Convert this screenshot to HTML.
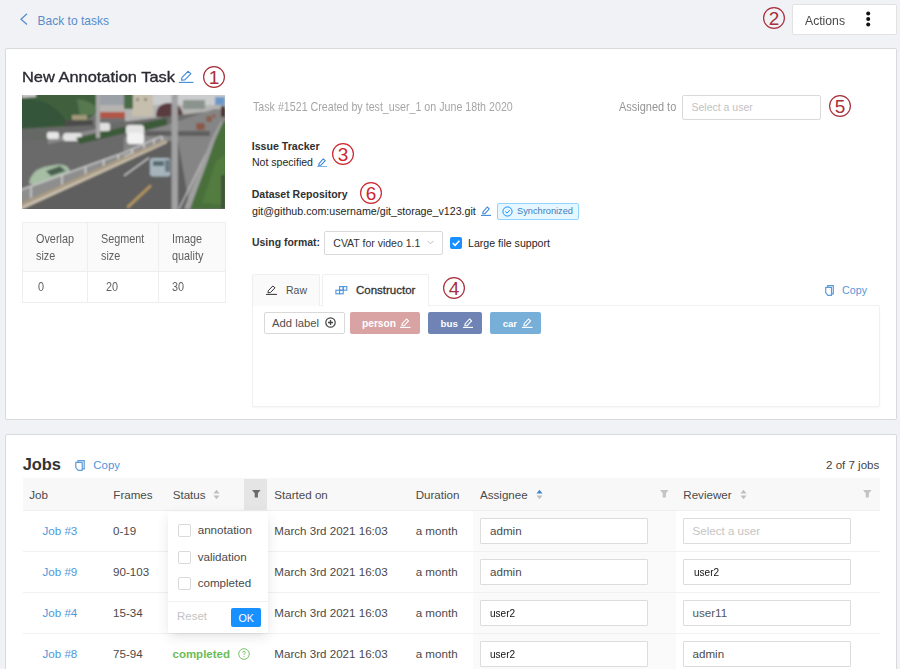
<!DOCTYPE html>
<html><head><meta charset="utf-8"><style>
html,body{margin:0;padding:0;width:900px;height:669px;overflow:hidden;background:#f0f2f5;position:relative;font-family:"Liberation Sans",sans-serif}
.t{position:absolute;white-space:nowrap;line-height:1}
.r{position:absolute;display:block}
</style></head><body>
<svg class="r" style="left:18px;top:12px" width="12" height="14" viewBox="0 0 12 14"><path d="M9 1.8 L3 7.2 L9 12.6" fill="none" stroke="#5a8ccc" stroke-width="1.3"/></svg>
<div class="t" style="left:37.50px;top:15.12px;font-size:12.024px;color:#5a8ccc;font-weight:400;">Back to tasks</div>
<svg class="r" style="left:762px;top:5.800000000000001px" width="24" height="24" viewBox="0 0 24 24"><circle cx="12" cy="12" r="10.4" fill="none" stroke="#a8303c" stroke-width="1.2"/><text x="12" y="18.6" text-anchor="middle" font-family="Liberation Sans" font-size="19" fill="#a8303c">2</text></svg>
<div class="r" style="left:792px;top:4px;width:105px;height:31px;background:#fff;border:1px solid #e2e2e2;border-radius:2px;box-sizing:border-box"></div>
<div class="t" style="left:805.00px;top:13.92px;font-size:13.081px;color:#4a4a4a;font-weight:400;transform:scaleX(0.9325);transform-origin:0 0;">Actions</div>
<svg class="r" style="left:864px;top:9px" width="8" height="20" viewBox="0 0 8 20"><circle cx="4.2" cy="4.6" r="2" fill="#111"/><circle cx="4.2" cy="10" r="2" fill="#111"/><circle cx="4.2" cy="15.4" r="2" fill="#111"/></svg>
<div class="r" style="left:5px;top:48px;width:892px;height:372px;background:#fff;border:1px solid #d8dadc;border-radius:2px;box-sizing:border-box"></div>
<div class="t" style="left:22.30px;top:69.20px;font-size:15.116px;color:#2b2b33;font-weight:400;transform:scaleX(1.0860);transform-origin:0 0;-webkit-text-stroke:0.35px #2b2b33">New Annotation Task</div>
<svg class="r" style="left:179px;top:70px" width="14.5" height="13" viewBox="0 0 14.5 13"><path d="M2.61 10.14 L2.9000000000000004 7.539999999999999 L8.99 1.3 L11.889999999999999 3.6400000000000006 L5.800000000000001 9.88 Z" fill="none" stroke="#3f8ad8" stroke-width="1.1" stroke-linejoin="round"/><line x1="0" y1="12.4" x2="14.5" y2="12.4" stroke="#3f8ad8" stroke-width="1.1"/></svg>
<svg class="r" style="left:202px;top:64.5px" width="24" height="24" viewBox="0 0 24 24"><circle cx="12" cy="12" r="10.4" fill="none" stroke="#a8303c" stroke-width="1.2"/><text x="12" y="18.6" text-anchor="middle" font-family="Liberation Sans" font-size="19" fill="#a8303c">1</text></svg>
<svg class="r" style="left:22px;top:95px" width="203" height="114" viewBox="0 0 203 114"><defs><filter id="bl" filterUnits="userSpaceOnUse" x="-5" y="-5" width="213" height="124"><feGaussianBlur stdDeviation="0.9"/></filter><clipPath id="cp"><rect width="203" height="114"/></clipPath></defs>
<g clip-path="url(#cp)"><g filter="url(#bl)">
<rect x="-5" y="-5" width="213" height="124" fill="#747474"/>
<!-- buildings strip -->
<rect x="74" y="-5" width="134" height="32" fill="#b4b4b2"/>
<rect x="78" y="-5" width="24" height="15" fill="#9aa0a6"/>
<rect x="131" y="-5" width="77" height="15" fill="#cbcccd"/>
<rect x="110" y="-5" width="21" height="26" fill="#c7bfae"/>
<rect x="114" y="3" width="3" height="3" fill="#8a8478"/><rect x="122" y="3" width="3" height="3" fill="#8a8478"/>
<rect x="161" y="5" width="22" height="9" fill="#8a948c"/>
<rect x="193" y="2" width="10" height="8" fill="#6a98c8"/>
<path d="M134 22 Q134 8 147 8 Q160 8 161 22 Z" fill="#5a3a40"/>
<rect x="78" y="10" width="24" height="7" fill="#b6b4b0"/>
<rect x="78" y="17" width="25" height="6" fill="#b25444"/>
<rect x="78" y="23" width="25" height="7" fill="#707070"/>
<!-- trees -->
<path d="M-5 -5 L74 -5 L76 14 L70 22 L60 26 L48 34 L-5 36 Z" fill="#41603e"/>
<path d="M-5 4 Q10 2 25 8 Q40 16 46 30 L-5 34 Z" fill="#36543a"/>
<path d="M55 4 Q68 6 74 12 L72 20 L58 20 Z" fill="#587850"/>
<path d="M0 -5 L14 -5 L14 2 L0 3 Z" fill="#c8cac8"/>
<rect x="102" y="-5" width="9" height="19" fill="#4c6a46"/>
<rect x="50" y="20" width="15" height="5" fill="#a09878"/>
<rect x="43" y="25" width="28" height="9" fill="#4c4c4a"/>
<!-- left upper road, wall, sidewalk -->
<path d="M-5 34 L74 30 L208 14 L208 60 L-5 97 Z" fill="#6a6a6a"/>
<path d="M-5 34 L26 34 L26 45 L-5 46 Z" fill="#666866"/>
<path d="M26 44 L74 34 L74 38 L26 49 Z" fill="#8a8a8a"/>
<rect x="25" y="37" width="12" height="7" rx="2" fill="#e6e6e6"/>
<rect x="41" y="38" width="19" height="8" rx="3" fill="#e2e2e2"/>
<path d="M54 43 L102 32 L145 23 L145 31 L102 38.5 L58 49 Z" fill="#3a5a38"/>
<rect x="74" y="28" width="14" height="8" rx="2" fill="#e0e0e0"/>
<rect x="74" y="-5" width="4" height="48" fill="#a8a8a8"/>
<!-- right road, lighter -->
<path d="M102 42 L145 30 L192 14 L208 14 L208 57 L190 57 L166 114 L100 114 Z" fill="#858585"/>
<rect x="104" y="30" width="18" height="10" rx="3" fill="#e4e4e4"/>
<rect x="105" y="38" width="17" height="11" rx="3" fill="#f2f2f2"/>
<rect x="174" y="28" width="9" height="7" rx="2" fill="#8a5a48"/>
<rect x="184" y="21" width="6" height="6" rx="2" fill="#8a6050"/>
<rect x="190" y="19" width="4" height="4" rx="1" fill="#8a6858"/>
<rect x="199" y="11" width="4" height="11" fill="#4a2a2a"/>
<!-- upper-left wet reflections -->

<!-- green car -->
<path d="M7 88 Q9 76 22 72 L36 69.5 Q46 69 48 76 L46 82 L14 92 Z" fill="#a6bea4"/>
<path d="M24 76 L38 71 L44 76 L29 81 Z" fill="#4a6050"/>
<!-- lower road -->
<path d="M-5 116 L102 66 L145 46 L156 46 L168 114 L-5 120 Z" fill="#5e5e5e"/>
<!-- fence -->
<path d="M-5 95.5 L102 57 L145 38 L145 44 L102 61.5 L-5 110 Z" fill="#8e8e8e"/>
<path d="M-5 95.5 L102 57 L145 38 L145 39.2 L102 58.2 L-5 97 Z" fill="#d0d0d0"/>
<g stroke="#dadada" stroke-width="1.3">
<line x1="9" y1="92" x2="9" y2="103"/><line x1="40" y1="80" x2="40" y2="91"/><line x1="63.5" y1="72" x2="63.5" y2="82"/><line x1="81.6" y1="65" x2="81.6" y2="75"/><line x1="96.4" y1="60" x2="96.4" y2="68"/><line x1="110" y1="54" x2="110" y2="62"/><line x1="122" y1="48.5" x2="122" y2="56"/><line x1="132" y1="44" x2="132" y2="51"/><line x1="140" y1="40.5" x2="140" y2="47"/>
</g>
<!-- curb -->
<path d="M-5 110 L102 61.5 L145 44 L145 48 L102 68 L-5 117 Z" fill="#aa9c84"/>
<path d="M-5 114 L102 65.5 L145 46.5 L145 47.5 L102 67 L-5 116 Z" fill="#d6cfc2"/>
<!-- markings -->
<path d="M102 80.8 L127 62.7" stroke="#d0d0d0" stroke-width="1.4"/>
<path d="M102 61.5 L112 57" stroke="#d0d0d0" stroke-width="1.2"/>
<path d="M105.4 112.5 L129 90.4" stroke="#b89a60" stroke-width="2.6"/>
<path d="M157 114 L185 57" stroke="#c8c8c8" stroke-width="1.2"/>
<!-- van -->
<rect x="128" y="63" width="20.5" height="18.4" rx="3" fill="#a6b4bc"/>
<rect x="131" y="66" width="11" height="5" fill="#5a6a72"/>
<rect x="143" y="65" width="5" height="12" fill="#6a7a82"/>
<!-- curb right & green strip -->
<path d="M162 114 L180 68 L189 45 L199 26 L201 27 L193 45 L185 68 L168 114 Z" fill="#a0a0a0"/>
<path d="M168 114 L185 68 L193 45 L201 27 L208 27 L208 114 Z" fill="#48703a"/>
<path d="M180 108 L194 66 L203 60 L203 110 Z" fill="#5a8244" opacity="0.6"/>
<rect x="199.5" y="80" width="3" height="34" fill="#3a4a34"/>
<!-- pole & bar -->
<rect x="123.5" y="36" width="64.5" height="5" fill="#5e5e5e"/>
<rect x="149.6" y="-5" width="6.2" height="124" fill="#a2a2a2"/>
</g></g>
</svg>
<div class="r" style="left:22px;top:222px;width:204px;height:81px;background:#fff;border:1px solid #eeeeee;box-sizing:border-box"></div>
<div class="r" style="left:23px;top:223px;width:202px;height:48px;background:#fafafa"></div>
<div class="r" style="left:23px;top:271px;width:202px;height:1px;background:#eeeeee"></div>
<div class="r" style="left:87px;top:223px;width:1px;height:79px;background:#eeeeee"></div>
<div class="r" style="left:158px;top:223px;width:1px;height:79px;background:#eeeeee"></div>
<div class="t" style="left:35.80px;top:232.79px;font-size:12.064px;color:#5f5f5f;font-weight:400;transform:scaleX(0.8996);transform-origin:0 0;">Overlap</div>
<div class="t" style="left:35.80px;top:249.79px;font-size:12.064px;color:#5f5f5f;font-weight:400;transform:scaleX(0.8996);transform-origin:0 0;">size</div>
<div class="t" style="left:100.60px;top:232.79px;font-size:12.064px;color:#5f5f5f;font-weight:400;transform:scaleX(0.8996);transform-origin:0 0;">Segment</div>
<div class="t" style="left:100.60px;top:249.79px;font-size:12.064px;color:#5f5f5f;font-weight:400;transform:scaleX(0.8996);transform-origin:0 0;">size</div>
<div class="t" style="left:171.50px;top:232.79px;font-size:12.064px;color:#5f5f5f;font-weight:400;transform:scaleX(0.8996);transform-origin:0 0;">Image</div>
<div class="t" style="left:171.50px;top:249.79px;font-size:12.064px;color:#5f5f5f;font-weight:400;transform:scaleX(0.8996);transform-origin:0 0;">quality</div>
<div class="t" style="left:38.00px;top:280.79px;font-size:12.064px;color:#5f5f5f;font-weight:400;transform:scaleX(0.8996);transform-origin:0 0;">0</div>
<div class="t" style="left:105.50px;top:280.79px;font-size:12.064px;color:#5f5f5f;font-weight:400;transform:scaleX(0.8996);transform-origin:0 0;">20</div>
<div class="t" style="left:171.50px;top:280.79px;font-size:12.064px;color:#5f5f5f;font-weight:400;transform:scaleX(0.8996);transform-origin:0 0;">30</div>
<div class="t" style="left:252.70px;top:101.81px;font-size:11.919px;color:#a6a6a6;font-weight:400;transform:scaleX(0.8959);transform-origin:0 0;">Task #1521 Created by test_user_1 on June 18th 2020</div>
<div class="t" style="left:618.70px;top:101.71px;font-size:11.919px;color:#949494;font-weight:400;transform:scaleX(0.9201);transform-origin:0 0;">Assigned to</div>
<div class="r" style="left:682px;top:95px;width:139px;height:25px;background:#fff;border:1px solid #dadada;border-radius:2px;box-sizing:border-box"></div>
<div class="t" style="left:691.50px;top:102.11px;font-size:10.504px;color:#c2c2c2;font-weight:400;">Select a user</div>
<svg class="r" style="left:828px;top:94px" width="24" height="24" viewBox="0 0 24 24"><circle cx="12" cy="12" r="10.4" fill="none" stroke="#a8303c" stroke-width="1.2"/><text x="12" y="18.6" text-anchor="middle" font-family="Liberation Sans" font-size="19" fill="#a8303c">5</text></svg>
<div class="t" style="left:251.70px;top:140.99px;font-size:10.636px;color:#303030;font-weight:700;">Issue Tracker</div>
<div class="t" style="left:252.00px;top:157.06px;font-size:10.553px;color:#262626;font-weight:400;">Not specified</div>
<svg class="r" style="left:316.5px;top:157.5px" width="10" height="9.5" viewBox="0 0 10 9.5"><path d="M1.7999999999999998 7.41 L2.0 5.51 L6.2 0.9500000000000001 L8.2 2.66 L4.0 7.22 Z" fill="none" stroke="#3f8ad8" stroke-width="1.1" stroke-linejoin="round"/><line x1="0" y1="8.9" x2="10" y2="8.9" stroke="#3f8ad8" stroke-width="1.1"/></svg>
<svg class="r" style="left:331.4px;top:141.5px" width="24" height="24" viewBox="0 0 24 24"><circle cx="12" cy="12" r="10.4" fill="none" stroke="#cc2630" stroke-width="1.2"/><text x="12" y="18.6" text-anchor="middle" font-family="Liberation Sans" font-size="19" fill="#cc2630">3</text></svg>
<div class="t" style="left:251.70px;top:188.68px;font-size:10.534px;color:#303030;font-weight:700;">Dataset Repository</div>
<svg class="r" style="left:359.3px;top:180.6px" width="24" height="24" viewBox="0 0 24 24"><circle cx="12" cy="12" r="10.4" fill="none" stroke="#cc2630" stroke-width="1.2"/><text x="12" y="18.6" text-anchor="middle" font-family="Liberation Sans" font-size="19" fill="#cc2630">6</text></svg>
<div class="t" style="left:252.00px;top:205.96px;font-size:10.682px;color:#1f1f1f;font-weight:400;">git@github.com:username/git_storage_v123.git</div>
<svg class="r" style="left:481px;top:206px" width="10" height="10" viewBox="0 0 10 10"><path d="M1.7999999999999998 7.800000000000001 L2.0 5.8 L6.2 1.0 L8.2 2.8000000000000003 L4.0 7.6 Z" fill="none" stroke="#3f8ad8" stroke-width="1.1" stroke-linejoin="round"/><line x1="0" y1="9.4" x2="10" y2="9.4" stroke="#3f8ad8" stroke-width="1.1"/></svg>
<div class="r" style="left:497px;top:203px;width:82px;height:17px;background:#e6f7ff;border:1px solid #91d5ff;border-radius:2px;box-sizing:border-box"></div>
<svg class="r" style="left:502px;top:206px" width="11" height="11" viewBox="0 0 11 11"><circle cx="5.5" cy="5.5" r="4.6" fill="none" stroke="#1890ff" stroke-width="1"/><path d="M3.4 5.6 L5 7.1 L7.7 4.2" fill="none" stroke="#1890ff" stroke-width="1"/></svg>
<div class="t" style="left:517.00px;top:207.17px;font-size:9.243px;color:#3a7cc0;font-weight:400;">Synchronized</div>
<div class="t" style="left:252.00px;top:238.14px;font-size:10.462px;color:#333;font-weight:700;">Using format:</div>
<div class="r" style="left:324px;top:231px;width:119px;height:24px;background:#fff;border:1px solid #d9d9d9;border-radius:2px;box-sizing:border-box"></div>
<div class="t" style="left:333.30px;top:238.10px;font-size:10.506px;color:#333;font-weight:400;">CVAT for video 1.1</div>
<svg class="r" style="left:427px;top:240px" width="7" height="5" viewBox="0 0 7 5"><path d="M0.5 0.8 L3.5 3.8 L6.5 0.8" fill="none" stroke="#bfbfbf" stroke-width="1"/></svg>
<div class="r" style="left:450px;top:237px;width:12px;height:12px;background:#1890ff;border-radius:2px"></div>
<svg class="r" style="left:450px;top:237px" width="12" height="12" viewBox="0 0 12 12"><path d="M2.8 6.2 L5.1 8.4 L9.4 3.8" fill="none" stroke="#fff" stroke-width="1.6"/></svg>
<div class="t" style="left:468.00px;top:238.01px;font-size:10.613px;color:#262626;font-weight:400;">Large file support</div>
<div class="r" style="left:252px;top:305px;width:628px;height:102px;background:#fff;border:1px solid #f1f1f1;border-radius:2px;box-shadow:0 1px 2px rgba(0,0,0,.04);box-sizing:border-box"></div>
<div class="r" style="left:252px;top:274px;width:68px;height:32px;background:#fafafa;border:1px solid #efefef;border-bottom:none;border-radius:2px 2px 0 0;box-sizing:border-box"></div>
<div class="r" style="left:322px;top:274px;width:107px;height:32px;background:#fff;border:1px solid #efefef;border-bottom:none;border-radius:2px 2px 0 0;box-sizing:border-box"></div>
<svg class="r" style="left:266px;top:285px" width="11" height="10" viewBox="0 0 11 10"><path d="M1.98 7.800000000000001 L2.2 5.8 L6.82 1.0 L9.02 2.8000000000000003 L4.4 7.6 Z" fill="none" stroke="#333" stroke-width="1.0" stroke-linejoin="round"/><line x1="0" y1="9.4" x2="11" y2="9.4" stroke="#333" stroke-width="1.0"/></svg>
<div class="t" style="left:286.00px;top:285.91px;font-size:10.498px;color:#505050;font-weight:400;">Raw</div>
<svg class="r" style="left:335px;top:285.5px" width="13" height="9" viewBox="0 0 13 9"><g fill="none" stroke="#4f95da" stroke-width="1.1"><rect x="4.6" y="0.6" width="3.6" height="3.6"/><rect x="8.2" y="0.6" width="3.6" height="3.6"/><rect x="0.9" y="4.2" width="3.6" height="3.6"/><rect x="4.6" y="4.2" width="3.6" height="3.6"/></g></svg>
<div class="t" style="left:356.00px;top:285.05px;font-size:11.513px;color:#333;font-weight:400;-webkit-text-stroke:0.3px #333">Constructor</div>
<svg class="r" style="left:441.8px;top:276.4px" width="24" height="24" viewBox="0 0 24 24"><circle cx="12" cy="12" r="10.4" fill="none" stroke="#a8303c" stroke-width="1.2"/><text x="12" y="18.6" text-anchor="middle" font-family="Liberation Sans" font-size="19" fill="#a8303c">4</text></svg>
<svg class="r" style="left:825px;top:284.5px" width="9" height="11" viewBox="0 0 9 11"><path d="M2.6999999999999997 2.42 V0.6599999999999999 H8.280000000000001 V8.8 H6.4799999999999995" fill="none" stroke="#5a9ad8" stroke-width="1.2"/><path d="M0.72 2.42 H6.4799999999999995 V10.34 H2.88 L0.72 7.699999999999999 Z" fill="none" stroke="#5a9ad8" stroke-width="1.2" stroke-linejoin="round"/></svg>
<div class="t" style="left:842.00px;top:284.93px;font-size:10.710px;color:#5598d8;font-weight:400;">Copy</div>
<div class="r" style="left:264px;top:312px;width:81px;height:22px;background:#fff;border:1px solid #d9d9d9;border-radius:2px;box-sizing:border-box"></div>
<div class="t" style="left:272.00px;top:317.96px;font-size:11.272px;color:#505050;font-weight:400;">Add label</div>
<svg class="r" style="left:325px;top:317px" width="11" height="11" viewBox="0 0 11 11"><circle cx="5.5" cy="5.5" r="4.7" fill="none" stroke="#444" stroke-width="1.2"/><path d="M5.5 3 V8 M3 5.5 H8" stroke="#444" stroke-width="1.3"/></svg>
<div class="r" style="left:350px;top:312px;width:70px;height:22px;background:#d9a3a3;border-radius:2px"></div>
<div class="t" style="left:362.00px;top:318.86px;font-size:10.199px;color:#fff;font-weight:700;">person</div>
<svg class="r" style="left:400px;top:318px" width="10.5" height="10" viewBox="0 0 10.5 10"><path d="M1.89 7.800000000000001 L2.1 5.8 L6.51 1.0 L8.61 2.8000000000000003 L4.2 7.6 Z" fill="none" stroke="#fff" stroke-width="1.1" stroke-linejoin="round"/><line x1="0" y1="9.4" x2="10.5" y2="9.4" stroke="#fff" stroke-width="1.1"/></svg>
<div class="r" style="left:428px;top:312px;width:54px;height:22px;background:#6f84b5;border-radius:2px"></div>
<div class="t" style="left:440.60px;top:319.21px;font-size:9.788px;color:#fff;font-weight:700;">bus</div>
<svg class="r" style="left:462.7px;top:318px" width="10.5" height="10" viewBox="0 0 10.5 10"><path d="M1.89 7.800000000000001 L2.1 5.8 L6.51 1.0 L8.61 2.8000000000000003 L4.2 7.6 Z" fill="none" stroke="#fff" stroke-width="1.1" stroke-linejoin="round"/><line x1="0" y1="9.4" x2="10.5" y2="9.4" stroke="#fff" stroke-width="1.1"/></svg>
<div class="r" style="left:490px;top:312px;width:51px;height:22px;background:#77afd9;border-radius:2px"></div>
<div class="t" style="left:502.70px;top:319.44px;font-size:9.524px;color:#fff;font-weight:700;">car</div>
<svg class="r" style="left:522px;top:318px" width="10.5" height="10" viewBox="0 0 10.5 10"><path d="M1.89 7.800000000000001 L2.1 5.8 L6.51 1.0 L8.61 2.8000000000000003 L4.2 7.6 Z" fill="none" stroke="#fff" stroke-width="1.1" stroke-linejoin="round"/><line x1="0" y1="9.4" x2="10.5" y2="9.4" stroke="#fff" stroke-width="1.1"/></svg>
<div class="r" style="left:5px;top:434px;width:892px;height:266px;background:#fff;border:1px solid #d8dadc;border-radius:2px;box-sizing:border-box"></div>
<div class="t" style="left:22.70px;top:456.40px;font-size:16.411px;color:#333;font-weight:700;">Jobs</div>
<svg class="r" style="left:75px;top:460px" width="10" height="11" viewBox="0 0 10 11"><path d="M3.0 2.42 V0.6599999999999999 H9.200000000000001 V8.8 H7.199999999999999" fill="none" stroke="#5a9ad8" stroke-width="1.2"/><path d="M0.8 2.42 H7.199999999999999 V10.34 H3.2 L0.8 7.699999999999999 Z" fill="none" stroke="#5a9ad8" stroke-width="1.2" stroke-linejoin="round"/></svg>
<div class="t" style="left:93.30px;top:459.62px;font-size:11.438px;color:#4f96dc;font-weight:400;">Copy</div>
<div class="t" style="left:826.00px;top:459.52px;font-size:11.552px;color:#444;font-weight:400;">2 of 7 jobs</div>
<div class="r" style="left:23px;top:478px;width:857px;height:33px;background:#f8f8f8"></div>
<div class="r" style="left:23px;top:510px;width:857px;height:1px;background:#efefef"></div>
<div class="r" style="left:244px;top:479px;width:23px;height:31px;background:#e5e5e5"></div>
<div class="r" style="left:473px;top:511px;width:203px;height:189px;background:#fafafa"></div>
<div class="r" style="left:23px;top:551px;width:857px;height:1px;background:#f1f1f1"></div>
<div class="r" style="left:23px;top:592px;width:857px;height:1px;background:#f1f1f1"></div>
<div class="r" style="left:23px;top:633px;width:857px;height:1px;background:#f1f1f1"></div>
<div class="t" style="left:29.30px;top:489.08px;font-size:11.600px;color:#4a4a4a;font-weight:400;">Job</div>
<div class="t" style="left:113.30px;top:489.08px;font-size:11.600px;color:#4a4a4a;font-weight:400;">Frames</div>
<div class="t" style="left:172.70px;top:489.08px;font-size:11.600px;color:#4a4a4a;font-weight:400;">Status</div>
<div class="t" style="left:274.30px;top:489.08px;font-size:11.600px;color:#4a4a4a;font-weight:400;">Started on</div>
<div class="t" style="left:415.70px;top:489.08px;font-size:11.600px;color:#4a4a4a;font-weight:400;">Duration</div>
<div class="t" style="left:480.00px;top:489.08px;font-size:11.600px;color:#4a4a4a;font-weight:400;">Assignee</div>
<div class="t" style="left:683.30px;top:489.08px;font-size:11.600px;color:#4a4a4a;font-weight:400;">Reviewer</div>
<svg class="r" style="left:212.5px;top:488.5px" width="7" height="11" viewBox="0 0 7 11"><path d="M0.5 4.5 L3.5 0.8 L6.5 4.5 Z" fill="#bfbfbf"/><path d="M0.5 6.5 L3.5 10.2 L6.5 6.5 Z" fill="#bfbfbf"/></svg>
<svg class="r" style="left:535.5px;top:489px" width="7" height="11" viewBox="0 0 7 11"><path d="M0.5 4.5 L3.5 0.8 L6.5 4.5 Z" fill="#3f86c8"/><path d="M0.5 6.5 L3.5 10.2 L6.5 6.5 Z" fill="#bfbfbf"/></svg>
<svg class="r" style="left:739.5px;top:488.5px" width="7" height="11" viewBox="0 0 7 11"><path d="M0.5 4.5 L3.5 0.8 L6.5 4.5 Z" fill="#bfbfbf"/><path d="M0.5 6.5 L3.5 10.2 L6.5 6.5 Z" fill="#bfbfbf"/></svg>
<svg class="r" style="left:251.6px;top:490.3px" width="9" height="8" viewBox="0 0 9 8"><path d="M0 0 H8.6 L5.9 3.3 V7.6 H2.7 V3.3 Z" fill="#6a6a6a"/></svg>
<svg class="r" style="left:659.8px;top:490.3px" width="9" height="8" viewBox="0 0 9 8"><path d="M0 0 H8.6 L5.9 3.3 V7.6 H2.7 V3.3 Z" fill="#c4c4c4"/></svg>
<svg class="r" style="left:863px;top:490.3px" width="9" height="8" viewBox="0 0 9 8"><path d="M0 0 H8.6 L5.9 3.3 V7.6 H2.7 V3.3 Z" fill="#c4c4c4"/></svg>
<div class="t" style="left:42.50px;top:525.18px;font-size:11.600px;color:#4f98dc;font-weight:400;">Job #3</div>
<div class="t" style="left:113.00px;top:525.18px;font-size:11.600px;color:#4a4a4a;font-weight:400;">0-19</div>
<div class="t" style="left:274.30px;top:525.18px;font-size:11.600px;color:#4a4a4a;font-weight:400;">March 3rd 2021 16:03</div>
<div class="t" style="left:415.70px;top:525.18px;font-size:11.600px;color:#4a4a4a;font-weight:400;">a month</div>
<div class="r" style="left:480px;top:517.5px;width:168px;height:26.0px;background:#fff;border:1px solid #dcdcdc;border-radius:1px;box-sizing:border-box"></div>
<div class="r" style="left:683px;top:517.5px;width:168px;height:26.0px;background:#fff;border:1px solid #dcdcdc;border-radius:1px;box-sizing:border-box"></div>
<div class="t" style="left:490.00px;top:525.18px;font-size:11.600px;color:#4a4a4a;font-weight:400;">admin</div>
<div class="t" style="left:692.50px;top:525.18px;font-size:11.600px;color:#c4c4c4;font-weight:400;">Select a user</div>
<div class="t" style="left:42.50px;top:566.18px;font-size:11.600px;color:#4f98dc;font-weight:400;">Job #9</div>
<div class="t" style="left:113.00px;top:566.18px;font-size:11.600px;color:#4a4a4a;font-weight:400;">90-103</div>
<div class="t" style="left:274.30px;top:566.18px;font-size:11.600px;color:#4a4a4a;font-weight:400;">March 3rd 2021 16:03</div>
<div class="t" style="left:415.70px;top:566.18px;font-size:11.600px;color:#4a4a4a;font-weight:400;">a month</div>
<div class="r" style="left:480px;top:558.5px;width:168px;height:26.0px;background:#fff;border:1px solid #dcdcdc;border-radius:1px;box-sizing:border-box"></div>
<div class="r" style="left:683px;top:558.5px;width:168px;height:26.0px;background:#fff;border:1px solid #dcdcdc;border-radius:1px;box-sizing:border-box"></div>
<div class="t" style="left:490.00px;top:566.18px;font-size:11.600px;color:#4a4a4a;font-weight:400;">admin</div>
<div class="t" style="left:693.70px;top:565.85px;font-size:11.628px;color:#111;font-weight:400;transform:scaleX(0.8664);transform-origin:0 0;">user2</div>
<div class="t" style="left:42.50px;top:607.18px;font-size:11.600px;color:#4f98dc;font-weight:400;">Job #4</div>
<div class="t" style="left:113.00px;top:607.18px;font-size:11.600px;color:#4a4a4a;font-weight:400;">15-34</div>
<div class="t" style="left:274.30px;top:607.18px;font-size:11.600px;color:#4a4a4a;font-weight:400;">March 3rd 2021 16:03</div>
<div class="t" style="left:415.70px;top:607.18px;font-size:11.600px;color:#4a4a4a;font-weight:400;">a month</div>
<div class="r" style="left:480px;top:599.5px;width:168px;height:26.0px;background:#fff;border:1px solid #dcdcdc;border-radius:1px;box-sizing:border-box"></div>
<div class="r" style="left:683px;top:599.5px;width:168px;height:26.0px;background:#fff;border:1px solid #dcdcdc;border-radius:1px;box-sizing:border-box"></div>
<div class="t" style="left:489.80px;top:606.75px;font-size:11.628px;color:#111;font-weight:400;transform:scaleX(0.8664);transform-origin:0 0;">user2</div>
<div class="t" style="left:692.50px;top:607.18px;font-size:11.600px;color:#555;font-weight:400;">user11</div>
<div class="t" style="left:42.50px;top:648.18px;font-size:11.600px;color:#4f98dc;font-weight:400;">Job #8</div>
<div class="t" style="left:113.00px;top:648.18px;font-size:11.600px;color:#4a4a4a;font-weight:400;">75-94</div>
<div class="t" style="left:274.30px;top:648.18px;font-size:11.600px;color:#4a4a4a;font-weight:400;">March 3rd 2021 16:03</div>
<div class="t" style="left:415.70px;top:648.18px;font-size:11.600px;color:#4a4a4a;font-weight:400;">a month</div>
<div class="r" style="left:480px;top:640.5px;width:168px;height:26.0px;background:#fff;border:1px solid #dcdcdc;border-radius:1px;box-sizing:border-box"></div>
<div class="r" style="left:683px;top:640.5px;width:168px;height:26.0px;background:#fff;border:1px solid #dcdcdc;border-radius:1px;box-sizing:border-box"></div>
<div class="t" style="left:489.80px;top:647.75px;font-size:11.628px;color:#111;font-weight:400;transform:scaleX(0.8664);transform-origin:0 0;">user2</div>
<div class="t" style="left:692.50px;top:648.18px;font-size:11.600px;color:#4a4a4a;font-weight:400;">admin</div>
<div class="t" style="left:172.50px;top:648.76px;font-size:11.499px;color:#6cbb58;font-weight:700;">completed</div>
<svg class="r" style="left:237.5px;top:648px" width="12" height="12" viewBox="0 0 12 12"><circle cx="6" cy="6" r="5.3" fill="none" stroke="#78c068" stroke-width="1"/><path d="M4.6 4.8 Q4.6 3.4 6 3.4 Q7.4 3.4 7.4 4.7 Q7.4 5.5 6 6.2 V7" fill="none" stroke="#78c068" stroke-width="0.9"/><circle cx="6" cy="8.5" r="0.6" fill="#78c068"/></svg>
<div class="r" style="left:168px;top:512px;width:100px;height:121px;background:#fff;border-radius:2px;box-shadow:0 3px 6px -4px rgba(0,0,0,.12),0 4px 14px 0 rgba(0,0,0,.09)"></div>
<div class="r" style="left:177.5px;top:523.8px;width:13.0px;height:13.0px;background:#fff;border:1px solid #d9d9d9;border-radius:2px;box-sizing:border-box"></div>
<div class="t" style="left:197.70px;top:524.18px;font-size:11.600px;color:#4a4a4a;font-weight:400;">annotation</div>
<div class="r" style="left:177.5px;top:550.5px;width:13.0px;height:13.0px;background:#fff;border:1px solid #d9d9d9;border-radius:2px;box-sizing:border-box"></div>
<div class="t" style="left:197.70px;top:550.68px;font-size:11.600px;color:#4a4a4a;font-weight:400;">validation</div>
<div class="r" style="left:177.5px;top:577.1999999999999px;width:13.0px;height:13.0px;background:#fff;border:1px solid #d9d9d9;border-radius:2px;box-sizing:border-box"></div>
<div class="t" style="left:197.70px;top:577.18px;font-size:11.600px;color:#4a4a4a;font-weight:400;">completed</div>
<div class="r" style="left:168px;top:601px;width:100px;height:1px;background:#f0f0f0"></div>
<div class="t" style="left:177.00px;top:610.88px;font-size:11.485px;color:#c4c4c4;font-weight:400;">Reset</div>
<div class="r" style="left:231px;top:607.5px;width:30px;height:19.5px;background:#1890ff;border-radius:2px"></div>
<div class="t" style="left:238.50px;top:612.92px;font-size:10.728px;color:#fff;font-weight:400;">OK</div>
</body></html>
